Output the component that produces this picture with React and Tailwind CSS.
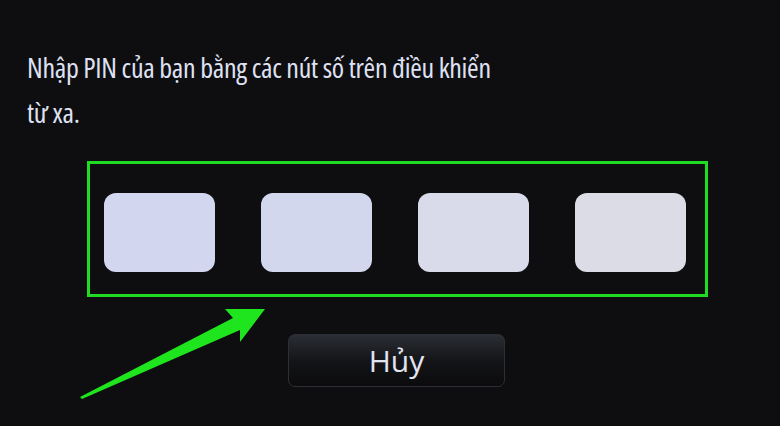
export default function App() {
  return (
    <div className="relative w-[780px] h-[426px] overflow-hidden bg-[#0e0e10]" style={{ fontFamily: '"Open Sans", "Noto Sans", sans-serif' }}>
      <div className="pt-[45px] pl-[27px] pr-[20px] text-[28px] leading-[45px] text-[#dfe1f3] font-medium font-stretch-condensed tracking-[-0.3px]">
        <div>Nhập PIN của bạn bằng các nút số trên điều khiển</div>
        <div>từ xa.</div>
      </div>
      <div className="ml-[87px] mt-[26px] w-[621px] h-[136px] border-[3px] border-[#1fdc22] flex gap-[46px] pl-[14px] pt-[29px]">
        <div className="w-[111px] h-[79px] rounded-[12px] bg-[#d2d6ee]" />
        <div className="w-[111px] h-[79px] rounded-[12px] bg-[#d3d7ee]" />
        <div className="w-[111px] h-[79px] rounded-[12px] bg-[#d9dbea]" />
        <div className="w-[111px] h-[79px] rounded-[12px] bg-[#dcdce6]" />
      </div>
      <div className="ml-[288px] mt-[37px] w-[217px] h-[53px] rounded-[7px] border border-[#2c2f35] bg-gradient-to-b from-[#2b2e34] via-[#141518] to-[#0b0b0d] flex items-center justify-center text-[30px] font-medium text-[#e3e4f2]">
        Hủy
      </div>
      <svg className="absolute left-0 top-0" width="780" height="426" viewBox="0 0 780 426">
        <polygon points="80,397 233,318 225,309 265,309 240,342 240,330 82,399" fill="#1ee51e" />
      </svg>
    </div>
  );
}
